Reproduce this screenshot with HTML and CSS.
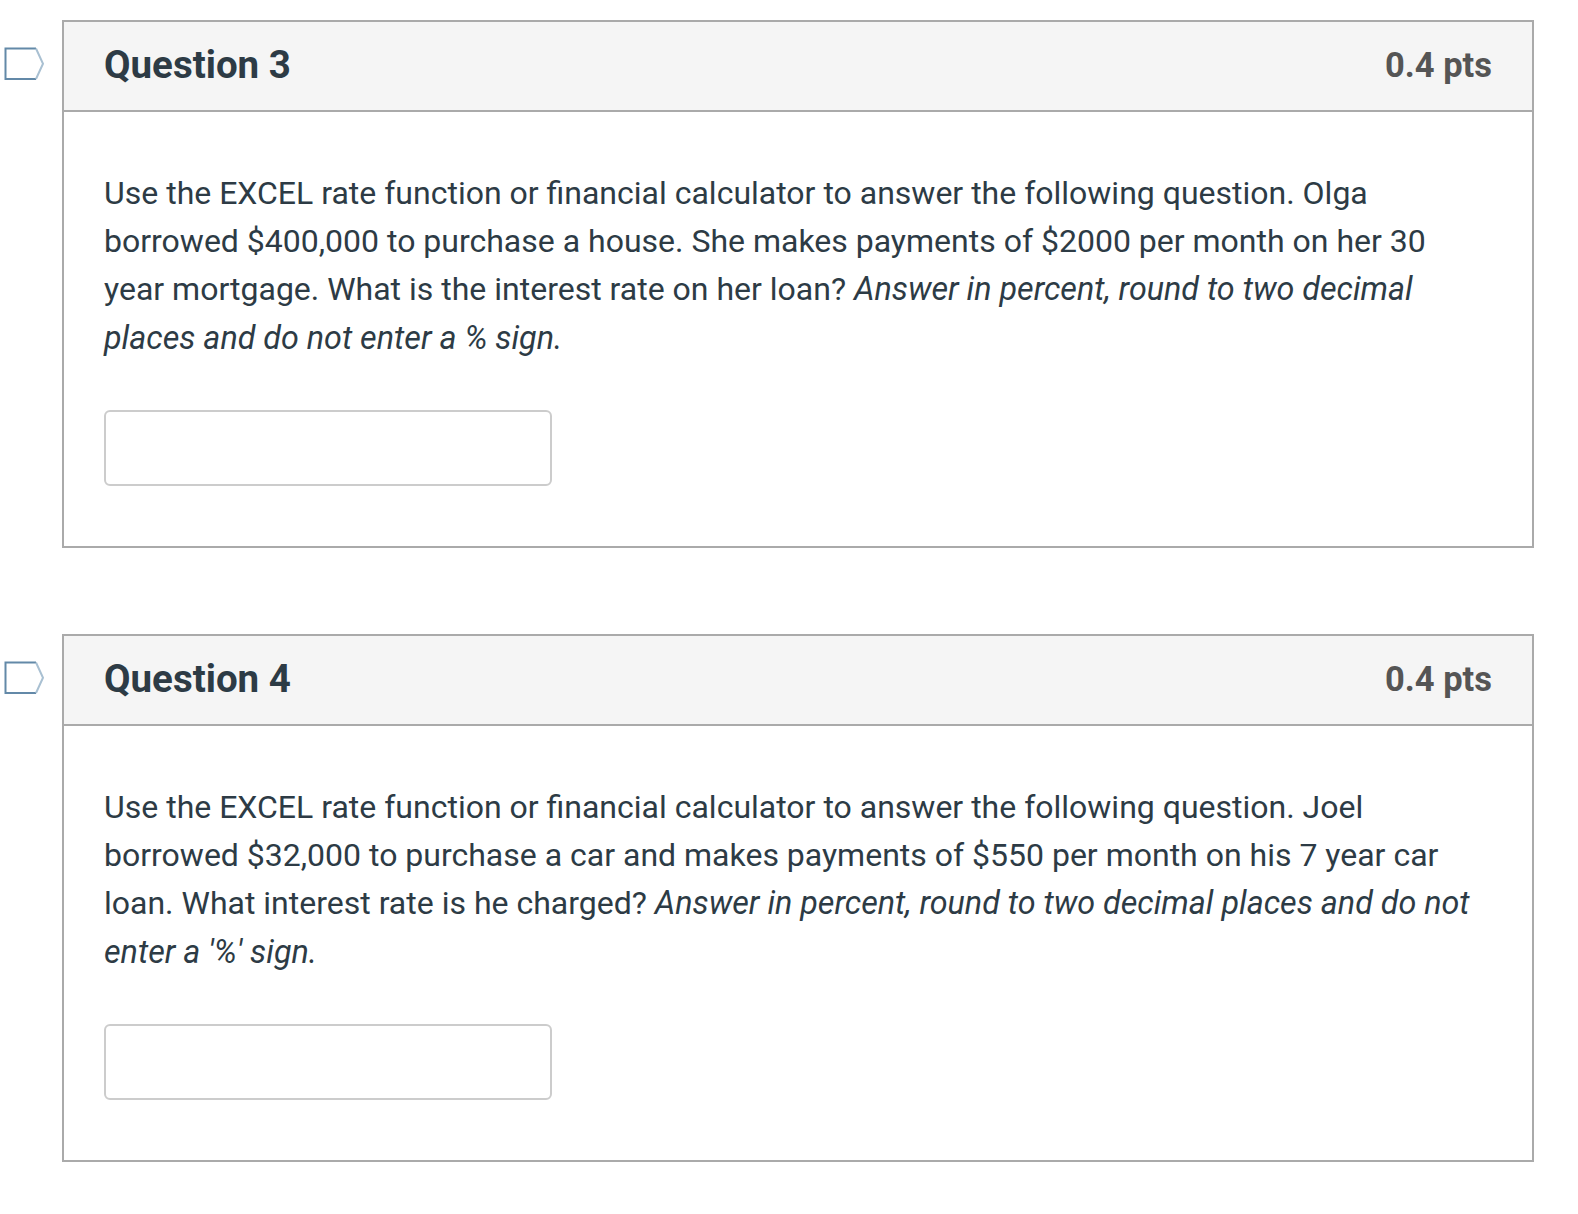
FILE: index.html

```html
<!DOCTYPE html>
<html>
<head>
  <title>Quiz</title>
  <link rel="stylesheet" href="styles.css">
</head>
<body>
  <div class="question-row">
    <svg class="flag" width="42" height="34" viewBox="0 0 42 34">
      <path d="M32 1.5H1.500V32H32" fill="none" stroke="#6389a8" stroke-width="2"/>
      <path d="M32 1.5L39 16.750L32 32" fill="none" stroke="#a9c0d2" stroke-width="2"/>
    </svg>
    <div class="question">
      <div class="question-header">
        <h3>Question 3</h3>
        <span class="pts">0.4 pts</span>
      </div>
      <div class="question-body">
        <p>Use the EXCEL rate function or financial calculator to answer the following question. Olga borrowed $400,000 to purchase a house. She makes payments of $2000 per month on her 30 year mortgage. What is the interest rate on her loan? <em>Answer in percent, round to two decimal places and do not enter a % sign.</em></p>
        <input class="answer" type="text">
      </div>
    </div>
  </div>

  <div class="question-row">
    <svg class="flag" width="42" height="34" viewBox="0 0 42 34">
      <path d="M32 1.5H1.500V32H32" fill="none" stroke="#6389a8" stroke-width="2"/>
      <path d="M32 1.5L39 16.750L32 32" fill="none" stroke="#a9c0d2" stroke-width="2"/>
    </svg>
    <div class="question">
      <div class="question-header">
        <h3>Question 4</h3>
        <span class="pts">0.4 pts</span>
      </div>
      <div class="question-body">
        <p>Use the EXCEL rate function or financial calculator to answer the following question. Joel borrowed $32,000 to purchase a car and makes payments of $550 per month on his 7 year car loan. What interest rate is he charged? <em>Answer in percent, round to two decimal places and do not enter a '%' sign.</em></p>
        <input class="answer" type="text">
      </div>
    </div>
  </div>
</body>
</html>
```

FILE: styles.css

```css
body {
  margin: 0;
  padding: 20px 44px 0 4px;
  background: #fff;
  color: #2d3b45;
  font-family: Roboto, sans-serif;
}
.question-row {
  display: flex;
  align-items: flex-start;
  margin-bottom: 86px;
}
.flag {
  flex: none;
  margin: 27px 16px 0 0;
}
.question {
  flex: 1;
  border: 2px solid #aaa;
}
.question-header {
  display: flex;
  justify-content: space-between;
  align-items: center;
  box-sizing: border-box;
  height: 90px;
  padding: 0 40px 2px 40px;
  background: #f5f5f5;
  border-bottom: 2px solid #aaa;
}
.question-header h3 {
  margin: 0 0 2px;
  font-size: 38.5px;
  font-weight: 700;
}
.pts {
  color: #555;
  font-size: 34.5px;
  font-weight: 700;
}
.question-body {
  padding: 57px 40px 60px;
}
.question-body p {
  margin: 0 0 48.2px;
  font-size: 32px;
  line-height: 48.2px;
}
.question-body em {
  font-size: 32.3px;
}
.answer {
  display: block;
  box-sizing: border-box;
  width: 448px;
  height: 76px;
  margin: 0;
  background: #fff;
  border: 2px solid #ccc;
  border-radius: 6px;
}
```
